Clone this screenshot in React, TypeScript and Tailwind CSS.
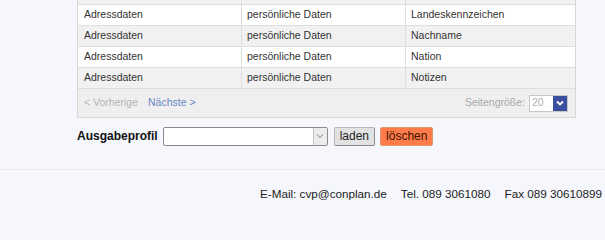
const rows = ["Landeskennzeichen", "Nachname", "Nation", "Notizen"];

function Row({ label, odd }: { label: string; odd: boolean }) {
  return (
    <div
      className={`grid grid-cols-[164px_164px_1fr] h-[21px] border-b border-[#dedede] ${
        odd ? "bg-white" : "bg-[#f1f1f1]"
      }`}
    >
      <div className="flex items-center pl-[6px] border-r border-[#dedede]">Adressdaten</div>
      <div className="flex items-center pl-[5px] border-r border-[#dedede]">persönliche Daten</div>
      <div className="flex items-center pl-[5px]">{label}</div>
    </div>
  );
}

export default function App() {
  return (
    <div className="w-[605px] h-[240px] bg-[#f5f7fc] overflow-hidden font-['Liberation_Sans',Arial,sans-serif]">
      <div className="ml-[77px] w-[499px] border-x border-b border-[#d6d6d6] bg-[#efefef] text-[10.5px] text-[#333]">
        <div className="grid grid-cols-[164px_164px_1fr] h-[5px] bg-[#f1f1f1] border-b border-[#dedede]">
          <div className="border-r border-[#dedede]" />
          <div className="border-r border-[#dedede]" />
          <div />
        </div>
        {rows.map((r, i) => (
          <Row key={r} label={r} odd={i % 2 === 0} />
        ))}
        <div className="flex items-center justify-between h-[28px] pl-[6px] pr-[7px]">
          <div className="flex gap-[10px]">
            <span className="text-[#b4b4b4]">&lt; Vorherige</span>
            <span className="text-[#6686c6]">Nächste &gt;</span>
          </div>
          <div className="flex items-center gap-[4px]">
            <span className="text-[#a9a9a9]">Seitengröße:</span>
            <div className="flex items-center h-[17px] w-[39px] border border-[#c8c8c8] bg-white">
              <span className="flex-1 pl-[2px] text-[#b0b0b0]">20</span>
              <span className="flex items-center justify-center w-[14px] h-[15px] bg-[#3c4ea0]">
                <svg width="8" height="6" viewBox="0 0 8 6">
                  <path d="M1 1.5 L4 4.5 L7 1.5" stroke="white" strokeWidth="1.8" fill="none" />
                </svg>
              </span>
            </div>
          </div>
        </div>
      </div>

      <div className="flex items-center ml-[77px] mt-[8px] h-[20px] text-[12px]">
        <span className="font-bold text-[#111] mr-[5px]">Ausgabeprofil</span>
        <div className="flex items-center w-[165px] h-[19px] border border-[#8a8a8a] bg-white rounded-[2px]">
          <div className="flex-1" />
          <span className="flex items-center justify-center w-[14px] h-[17px] bg-[#ececec] border-l border-[#c4c4c4]">
            <svg width="8" height="6" viewBox="0 0 8 6">
              <path d="M1 1.5 L4 4.5 L7 1.5" stroke="#777" strokeWidth="1" fill="none" />
            </svg>
          </span>
        </div>
        <button className="ml-[6px] h-[19px] px-[5px] bg-[#e2e2e2] border border-[#b8b8b8] border-r-[#8a8a8a] border-b-[#8a8a8a] rounded-[2px] text-[12px] text-[#222] leading-none">
          laden
        </button>
        <button className="ml-[5px] h-[19px] px-[5px] bg-[#ff7c4a] border border-[#e4946e] rounded-[2px] text-[12px] text-[#3a1200] leading-none">
          löschen
        </button>
      </div>

      <div className="mt-[23px] border-t border-[#e8eaf0]" />
      <div className="flex justify-end gap-[14px] pr-[3px] mt-[15px] text-[11.7px] text-[#222]">
        <span>E-Mail: cvp@conplan.de</span>
        <span>Tel. 089 3061080</span>
        <span>Fax 089 30610899</span>
      </div>
    </div>
  );
}
